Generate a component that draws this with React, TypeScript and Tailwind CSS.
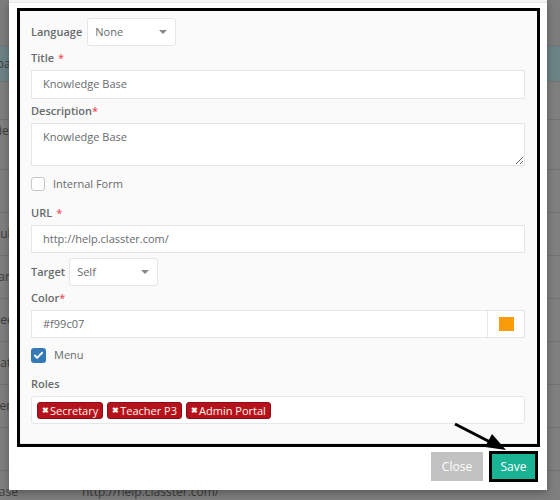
import React from 'react';
import { Check } from 'lucide-react';

const bgRows = [
  { h: 'h-[46px]', bg: 'bg-[#7d7d7d]', a: '', b: '' },
  { h: 'h-[36px]', bg: 'bg-[#6c8386]', a: 'Download', b: '' },
  { h: 'h-[38px]', bg: 'bg-[#7f7f7f]', a: '', b: '' },
  { h: 'h-[50px]', bg: 'bg-[#7f7f7f]', a: 'Overview', b: '', top: true },
  { h: 'h-[43px]', bg: 'bg-[#7f7f7f]', a: '', b: '' },
  { h: 'h-[43px]', bg: 'bg-[#7f7f7f]', a: 'Modulu', b: '' },
  { h: 'h-[43px]', bg: 'bg-[#7f7f7f]', a: 'Financ', b: '' },
  { h: 'h-[43px]', bg: 'bg-[#7f7f7f]', a: 'Timesheet', b: '' },
  { h: 'h-[43px]', bg: 'bg-[#7f7f7f]', a: 'Update', b: '' },
  { h: 'h-[43px]', bg: 'bg-[#7f7f7f]', a: 'Student', b: '' },
  { h: 'h-[43px]', bg: 'bg-[#7f7f7f]', a: '', b: '' },
  { h: 'h-[43px]', bg: 'bg-[#7f7f7f]', a: 'Knowledge Base', b: 'http://help.classter.com/' },
];

const Label = ({ children, req, gap }: { children: React.ReactNode; req?: boolean; gap?: boolean }) => (
  <div className="flex h-[24px] items-center text-[11px] font-semibold text-[#676a6c]">
    {children}
    {req && <span className={`text-[#ed5565] ${gap ? 'ml-[4px]' : ''}`}>*</span>}
  </div>
);

const Select = ({ value, w }: { value: string; w: string }) => (
  <div className={`flex h-[28px] ${w} items-center justify-between rounded-[3px] border border-[#e5e6e7] bg-white pl-[7px] pr-[8px] text-[11px] text-[#676a6c]`}>
    <span>{value}</span>
    <span className="h-0 w-0 border-x-[4px] border-t-[4px] border-x-transparent border-t-[#888]" />
  </div>
);

const Tag = ({ text }: { text: string }) => (
  <span className="flex h-[17px] items-center rounded-[3px] border border-[#8c0d14] bg-[#b5121d] pl-[4px] pr-[4px] text-[11px] leading-none text-[#fff6e8]">
    <span className="mr-[1px] text-[8px] font-bold">✖</span>
    {text}
  </span>
);

export default function App() {
  return (
    <div className="relative h-[500px] w-[560px] overflow-hidden bg-[#7f7f7f] font-['Open_Sans',sans-serif]">
      {/* page behind the overlay */}
      <div className="flex flex-col">
        {bgRows.map((r, i) => (
          <div key={i} className={`flex ${r.h} ${r.bg} shrink-0 border-b border-[#737373] text-[12px] text-[#3c3c3c] ${r.top ? 'items-start pt-[2px]' : 'items-center'}`}>
            <span className="ml-[-86px] w-[104px] shrink-0 text-right whitespace-nowrap">{r.a}</span>
            <span className="ml-[64px] whitespace-nowrap">{r.b}</span>
          </div>
        ))}
      </div>

      {/* modal */}
      <div className="absolute left-[9px] top-0 flex h-[490px] w-[538px] flex-col bg-white shadow-[0_3px_8px_rgba(0,0,0,0.3)]">
        <div className="h-[3px] border-b border-[#e7e7e7] bg-[#f4f4f4]" />
        <div className="ml-[8px] mr-[7px] mt-[5px] border-[3px] border-black shadow-[inset_0_0_0_1px_#9a9a9a]">
          <div className="border-b border-[#e7eaec] bg-[#fafafa] pl-[11px] pr-[12px] pb-[19px] pt-[7px]">
            <div className="flex items-center gap-[5px]">
              <span className="text-[11px] font-semibold text-[#676a6c]">Language</span>
              <Select value="None" w="w-[89px]" />
            </div>

            <Label req gap>Title</Label>
            <div className="flex h-[29px] items-center border border-[#e5e6e7] bg-white px-[11px] text-[11px] text-[#676a6c]">Knowledge Base</div>

            <Label req>Description</Label>
            <textarea
              readOnly
              defaultValue="Knowledge Base"
              className="block h-[43px] w-full border border-[#e5e6e7] bg-white px-[11px] pt-[5px] text-[11px] text-[#676a6c] outline-none"
            />

            <div className="flex h-[35px] items-start gap-[8px] pt-[11px]">
              <span className="h-[14px] w-[14px] rounded-[3px] border border-[#c8c8c8] bg-white" />
              <span className="text-[11px] leading-[14px] text-[#676a6c]">Internal Form</span>
            </div>

            <Label req gap>URL</Label>
            <div className="flex h-[28px] items-center border border-[#e5e6e7] bg-white px-[11px] text-[11px] text-[#676a6c]">http://help.classter.com/</div>

            <div className="mt-[5px] flex items-center gap-[4px]">
              <span className="text-[11px] font-semibold text-[#676a6c]">Target</span>
              <Select value="Self" w="w-[89px]" />
            </div>

            <Label req>Color</Label>
            <div className="flex h-[28px] border border-[#e5e6e7] bg-white text-[11px] text-[#676a6c]">
              <div className="flex flex-1 items-center px-[11px]">#f99c07</div>
              <div className="flex w-[37px] items-center justify-center border-l border-[#e5e6e7]">
                <span className="h-[14px] w-[15px] bg-[#f99c07]" />
              </div>
            </div>

            <div className="flex h-[34px] items-center gap-[8px]">
              <span className="flex h-[15px] w-[15px] items-center justify-center rounded-[3px] bg-[#337ab7]">
                <Check size={11} strokeWidth={4} color="white" />
              </span>
              <span className="text-[11px] text-[#676a6c]">Menu</span>
            </div>

            <div className="flex h-[24px] items-center text-[11px] font-semibold text-[#676a6c]">Roles</div>
            <div className="flex h-[28px] items-center gap-[4px] rounded-[3px] border border-[#e5e6e7] bg-white px-[5px]">
              <Tag text="Secretary" />
              <Tag text="Teacher P3" />
              <Tag text="Admin Portal" />
            </div>
          </div>
        </div>

        <div className="mt-[4px] flex justify-end gap-[6px] pr-[9px]">
          <button className="mt-[1px] h-[29px] w-[52px] bg-[#c2c2c2] text-[12px] text-white">Close</button>
          <button className="h-[31px] w-[49px] border-[3px] border-black bg-[#1ab394] text-[12px] text-white">Save</button>
        </div>
      </div>

      {/* annotation arrow */}
      <svg className="absolute left-0 top-0" width="560" height="500" viewBox="0 0 560 500">
        <line x1="455" y1="424" x2="492" y2="443" stroke="black" strokeWidth="3" />
        <polygon points="506,450 485,447 492,434" fill="black" />
      </svg>
    </div>
  );
}
